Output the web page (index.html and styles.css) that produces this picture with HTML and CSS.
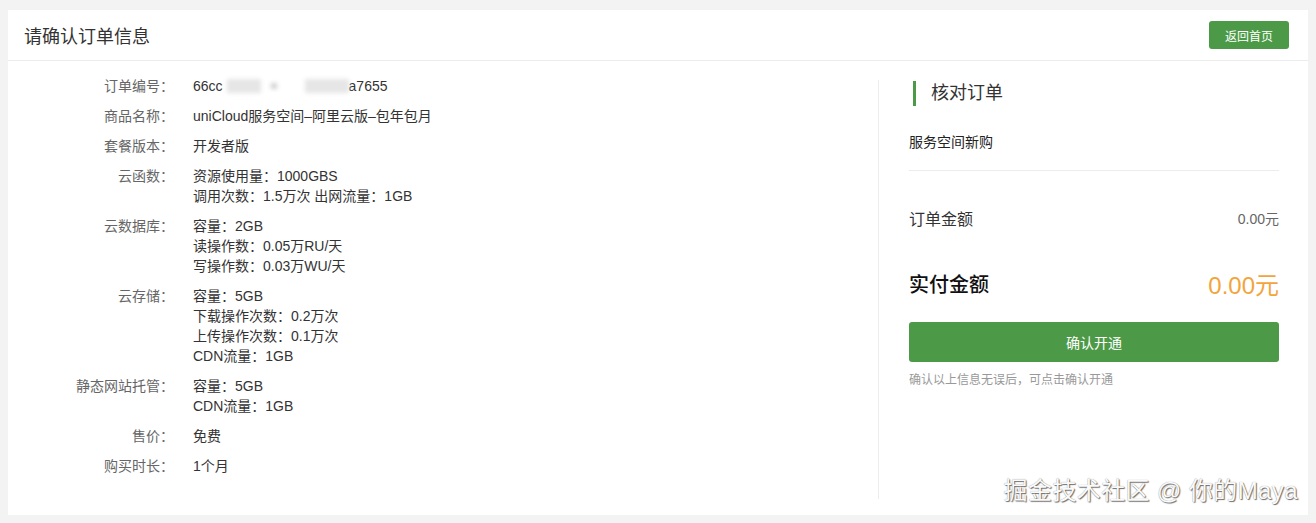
FILE: index.html
```html
<!DOCTYPE html>
<html lang="zh-CN">
<head>
<meta charset="utf-8">
<title>请确认订单信息</title>
<link rel="stylesheet" href="styles.css">
</head>
<body>
<div class="card">
  <div class="card-header">
    <h1 class="page-title">请确认订单信息</h1>
    <a class="btn-home" href="#">返回首页</a>
  </div>
  <div class="card-body">
    <div class="info">
      <div class="row"><div class="label">订单编号：</div><div class="value"><div class="line">66cc<span class="blur b1"></span><span class="blur b2"></span><span class="blur b3"></span>a7655</div></div></div>
      <div class="row"><div class="label">商品名称：</div><div class="value"><div class="line">uniCloud服务空间–阿里云版–包年包月</div></div></div>
      <div class="row"><div class="label">套餐版本：</div><div class="value"><div class="line">开发者版</div></div></div>
      <div class="row"><div class="label">云函数：</div><div class="value"><div class="line">资源使用量：1000GBS</div><div class="line">调用次数：1.5万次 出网流量：1GB</div></div></div>
      <div class="row"><div class="label">云数据库：</div><div class="value"><div class="line">容量：2GB</div><div class="line">读操作数：0.05万RU/天</div><div class="line">写操作数：0.03万WU/天</div></div></div>
      <div class="row"><div class="label">云存储：</div><div class="value"><div class="line">容量：5GB</div><div class="line">下载操作次数：0.2万次</div><div class="line">上传操作次数：0.1万次</div><div class="line">CDN流量：1GB</div></div></div>
      <div class="row"><div class="label">静态网站托管：</div><div class="value"><div class="line">容量：5GB</div><div class="line">CDN流量：1GB</div></div></div>
      <div class="row"><div class="label">售价：</div><div class="value"><div class="line">免费</div></div></div>
      <div class="row"><div class="label">购买时长：</div><div class="value"><div class="line">1个月</div></div></div>
    </div>
    <div class="summary">
      <h2 class="summary-title">核对订单</h2>
      <div class="summary-type">服务空间新购</div>
      <div class="amount-row">
        <span class="amount-label">订单金额</span>
        <span class="amount-value">0.00元</span>
      </div>
      <div class="pay-row">
        <span class="pay-label">实付金额</span>
        <span class="pay-value">0.00元</span>
      </div>
      <button class="btn-confirm" type="button">确认开通</button>
      <div class="hint">确认以上信息无误后，可点击确认开通</div>
    </div>
  </div>
</div>
<div class="watermark">掘金技术社区 @ 你的Maya</div>
</body>
</html>
```

FILE: styles.css
```css
* { box-sizing: border-box; }
html, body { margin: 0; padding: 0; }
body {
  position: relative;
  width: 1316px;
  height: 523px;
  overflow: hidden;
  background: #f3f3f3;
  padding: 10px 8px 0 8px;
  font-family: "Liberation Sans", "Noto Sans CJK SC", sans-serif;
  color: #333;
}
.card {
  background: #fff;
  height: 505px;
}
.card-header {
  height: 51px;
  display: flex;
  align-items: center;
  justify-content: space-between;
  padding: 0 19px 1px 16px;
  border-bottom: 1px solid #ececec;
}
.page-title {
  margin: 0;
  font-size: 18px;
  font-weight: normal;
  color: #333;
}
.btn-home {
  display: flex;
  align-items: center;
  justify-content: center;
  width: 80px;
  height: 28px;
  margin-top: 1px;
  background: #4c9a47;
  color: #fff;
  font-size: 12px;
  text-decoration: none;
  border-radius: 3px;
}
.card-body {
  display: flex;
  height: 453px;
}
.info {
  width: 870px;
  padding-top: 15px;
  font-size: 14px;
}
.row {
  display: flex;
  margin-bottom: 10px;
}
.label {
  width: 166px;
  text-align: right;
  color: #666;
  line-height: 20px;
  flex: none;
}
.value {
  margin-left: 19px;
  color: #333;
}
.line {
  line-height: 20px;
  white-space: nowrap;
}
.blur {
  display: inline-block;
  height: 14px;
  vertical-align: -2px;
  background: #e6e6e6;
  filter: blur(2px);
}
.b1 { width: 34px; margin-left: 4px; }
.b2 { width: 6px; height: 6px; margin-left: 10px; background: #cfcfcf; vertical-align: 2px; }
.b3 { width: 44px; margin-left: 28px; margin-right: 0; }
.summary {
  width: 430px;
  border-left: 1px solid #ececec;
  margin: 19px 0 15px 0;
  padding: 0 29px 0 30px;
}
.summary-title {
  margin: 1px 0 0 4px;
  border-left: 3px solid #4c9a47;
  padding-left: 15px;
  height: 25px;
  line-height: 25px;
  font-size: 18px;
  font-weight: normal;
  color: #333;
}
.summary-type {
  margin-top: 26px;
  line-height: 20px;
  font-size: 14px;
  color: #222;
  padding-bottom: 18px;
  border-bottom: 1px solid #ececec;
}
.amount-row {
  display: flex;
  justify-content: space-between;
  align-items: center;
  margin-top: 36px;
  height: 22px;
}
.amount-label { font-size: 16px; color: #333; }
.amount-value { font-size: 14px; color: #666; }
.pay-row {
  display: flex;
  justify-content: space-between;
  align-items: center;
  margin-top: 37px;
  height: 34px;
}
.pay-label { font-size: 20px; color: #111; font-weight: 500; }
.pay-value { font-size: 24px; color: #f2a53c; }
.btn-confirm {
  display: block;
  width: 100%;
  height: 40px;
  margin-top: 22px;
  border: 0;
  border-radius: 3px;
  background: #4c9a47;
  color: #fff;
  font-family: inherit;
  font-size: 14px;
  cursor: pointer;
}
.hint {
  margin-top: 10px;
  line-height: 17px;
  font-size: 12px;
  color: #999;
}
.watermark {
  position: absolute;
  right: 18px;
  bottom: 18px;
  line-height: 28px;
  font-size: 24px;
  letter-spacing: 0.4px;
  font-family: "Liberation Sans", "Noto Sans CJK SC", sans-serif;
  color: #fafafa;
  text-shadow: 1px 1px 1px rgba(0,0,0,0.55), 0 0 1px rgba(0,0,0,0.45);
  white-space: nowrap;
}
```
